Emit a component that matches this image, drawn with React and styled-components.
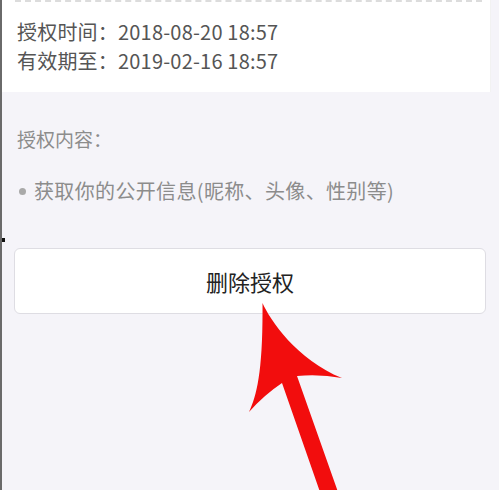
import React from 'react';
import styled, { createGlobalStyle } from 'styled-components';

const GlobalStyle = createGlobalStyle`
  html, body {
    margin: 0;
    padding: 0;
    background: #f5f4f9;
  }
  body {
    font-family: "Noto Sans CJK SC", "Noto Sans", sans-serif;
  }
`;

const Page = styled.div`
  position: relative;
  width: 499px;
  height: 490px;
  overflow: hidden;
  background: #f5f4f9;
  border-left: 2px solid #6a6a6a;
  box-sizing: border-box;
`;

const InfoPanel = styled.div`
  background: #fff;
  height: 92px;
  padding: 17px 0 0 15px;
  box-sizing: border-box;
  position: relative;
  border-right: 1px solid #f2f2f2;
  margin-right: 8px;

  &::before {
    content: '';
    position: absolute;
    top: 0;
    left: 13px;
    right: 8px;
    border-top: 2px dashed #dcdcdc;
  }
`;

const InfoLine = styled.div`
  font-size: 20px;
  line-height: 29px;
  letter-spacing: 0.2px;
  color: #555;
`;

const Section = styled.div`
  padding: 32px 0 0 15px;
`;

const SectionTitle = styled.div`
  font-size: 19px;
  line-height: 30px;
  color: #8c8c8c;
`;

const Bullet = styled.div`
  display: flex;
  align-items: center;
  gap: 8px;
  margin-top: 22px;
  font-size: 20px;
  line-height: 30px;
  letter-spacing: 0.35px;
  color: #8c8c8c;

  &::before {
    content: '';
    width: 7px;
    height: 7px;
    border-radius: 50%;
    background: #a9a9a9;
    margin-left: 2px;
  }
`;

const Dot = styled.div`
  position: absolute;
  left: 0;
  top: 238px;
  width: 3px;
  height: 4px;
  background: #111;
`;

const ButtonWrap = styled.div`
  padding: 42px 12px 0 12px;
`;

const DeleteButton = styled.button`
  display: block;
  width: 472px;
  height: 66px;
  background: #fff;
  border: 1px solid #dedde3;
  border-radius: 6px;
  font-family: "Noto Sans CJK SC", "Noto Sans", sans-serif;
  font-size: 22px;
  color: #222;
  padding: 0;
`;

const Arrow = styled.svg`
  position: absolute;
  left: 0;
  top: 0;
  pointer-events: none;
`;

export default function App() {
  return (
    <>
      <GlobalStyle />
      <Page>
        <InfoPanel>
          <InfoLine>授权时间：2018-08-20 18:57</InfoLine>
          <InfoLine>有效期至：2019-02-16 18:57</InfoLine>
        </InfoPanel>
        <Section>
          <SectionTitle>授权内容：</SectionTitle>
          <Bullet>获取你的公开信息(昵称、头像、性别等)</Bullet>
        </Section>
        <Dot />
        <ButtonWrap>
          <DeleteButton>删除授权</DeleteButton>
        </ButtonWrap>
        <Arrow width="499" height="490" viewBox="0 0 499 490">
          <path
            d="M260.5 303 C268 320 295 360 340 378 Q318 374 295 376 L336 492 L318 492 L280 383 Q262 395 247 412 C255 395 261 370 260.5 303 Z"
            fill="#f20d0d"
          />
        </Arrow>
      </Page>
    </>
  );
}
